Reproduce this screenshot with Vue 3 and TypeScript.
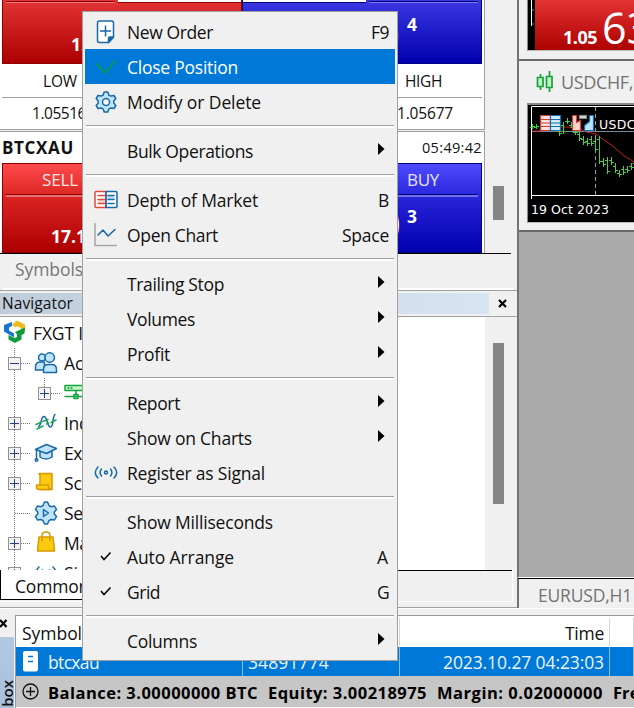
<script setup lang="ts">
type Entry = {
  label?: string
  width?: number
  key?: string
  keyWidth?: number
  icon?: string
  sub?: boolean
  active?: boolean
}

const entries: Entry[] = [
  { label: 'New Order', width: 86, key: 'F9', keyWidth: 18, icon: 'new' },
  { label: 'Close Position', width: 111, icon: 'close', active: true },
  { label: 'Modify or Delete', width: 134, icon: 'gear' },
  {},
  { label: 'Bulk Operations', width: 126, sub: true },
  {},
  { label: 'Depth of Market', width: 131, key: 'B', keyWidth: 11, icon: 'depth' },
  { label: 'Open Chart', width: 91, key: 'Space', keyWidth: 47, icon: 'chart' },
  {},
  { label: 'Trailing Stop', width: 97, sub: true },
  { label: 'Volumes', width: 68, sub: true },
  { label: 'Profit', width: 43, sub: true },
  {},
  { label: 'Report', width: 53, sub: true },
  { label: 'Show on Charts', width: 125, sub: true },
  { label: 'Register as Signal', width: 138, icon: 'signal' },
  {},
  { label: 'Show Milliseconds', width: 146 },
  { label: 'Auto Arrange', width: 107, key: 'A', keyWidth: 12, icon: 'tick' },
  { label: 'Grid', width: 33, key: 'G', keyWidth: 12, icon: 'tick' },
  {},
  { label: 'Columns', width: 70, sub: true },
]

type Node = { label: string; width: number; icon: string; box: '' | '+' | '-'; child?: boolean }
const nodes: Node[] = [
  { label: 'Accounts', width: 73, icon: 'users', box: '-' },
  { label: '', width: 0, icon: 'server', box: '+', child: true },
  { label: 'Indicators', width: 78, icon: 'wave', box: '+' },
  { label: 'Expert Advisors', width: 118, icon: 'cap', box: '+' },
  { label: 'Scripts', width: 54, icon: 'script', box: '+' },
  { label: 'Services', width: 64, icon: 'service', box: '' },
  { label: 'Market', width: 55, icon: 'bag', box: '+' },
  { label: 'Signals', width: 56, icon: 'signal', box: '+' },
]

const bars: number[][] = [
  [0, 20, 25], [4, 20, 25], [27, 24, 32], [31, 18, 30], [35, 14, 20], [39, 18, 24],
  [43, 25, 31], [47, 27, 37], [51, 32, 41], [55, 34, 42], [59, 32, 42], [63, 34, 48],
  [67, 32, 60], [71, 54, 63], [75, 53, 70], [79, 53, 61], [83, 59, 69], [87, 66, 73],
  [91, 62, 71], [95, 62, 69], [99, 59, 66], [103, 56, 63],
]

/* Spreads the letters of a label so that it takes the given number of pixels. */
const vFit = {
  mounted(el: HTMLElement, binding: { value: number | undefined }) {
    const n = (el.textContent || '').length
    if (!n || !binding.value) return
    const natural = el.getBoundingClientRect().width
    el.style.letterSpacing = `${(binding.value - natural) / n}px`
  },
}
</script>

<template>
  <div class="screen">
    <div class="upper">
      <section class="left">
        <div class="watch">
          <div class="cards">
            <div class="card first">
              <div class="tiles">
                <div class="tile red"><i class="rule fromleft"></i><i class="slot end"></i><b class="small lowprice">1.05</b></div>
                <div class="tile blue"><i class="slot start"></i><i class="rule fromright"></i><b class="small pip">4</b><span class="ring ringtop">0</span></div>
              </div>
              <div class="stat"><span v-fit="34">LOW</span><span v-fit="37">HIGH</span></div>
              <div class="stat values"><span v-fit="54">1.05516</span><span v-fit="56">1.05677</span></div>
            </div>
            <div class="card second">
              <div class="head"><b v-fit="72">BTCXAU</b><span v-fit="60">05:49:42</span></div>
              <div class="tiles">
                <div class="tile red tall">
                  <span class="side" v-fit="36">SELL</span><b class="small price">17.18</b>
                </div>
                <div class="tile blue tall">
                  <span class="side" v-fit="32">BUY</span><b class="small three">3</b><span class="ring">0</span>
                </div>
              </div>
            </div>
          </div>
          <div class="track"><div class="thumb"></div></div>
        </div>
        <div class="watchtabs"><span v-fit="68">Symbols</span></div>
        <div class="navtitle">
          <div class="caption"><span v-fit="71">Navigator</span></div>
          <svg class="x" width="9" height="9" viewBox="0 0 9 9"><path d="M1 1l7 7M8 1L1 8" stroke="#000" stroke-width="2.2" /></svg>
        </div>
        <div class="nav">
          <div class="tree">
            <div class="row root">
              <svg width="24" height="24" viewBox="0 0 24 24">
                <path d="M1 5l8-3v4L6 7.500v3l5 3v4L1 11.500z" fill="#1675d1" />
                <path d="M9 4.500l5-4 8 4v5.500l-4 2V8l-4-1.500-2 1z" fill="#efbd22" />
                <path d="M12 12l10-4.500-.5 6-3 1.500v4.500L12 23l-6.500-3.500V15l6 3 2.500-1v-2.500z" fill="#119a3b" />
              </svg>
              <span v-fit="50">FXGT I</span>
            </div>
            <div v-for="node in nodes" :key="node.icon" class="row">
              <svg class="gutter" :width="node.child ? 62 : 32" height="30">
                <path d="M14.5 0V30" stroke="#777" stroke-dasharray="1 1" />
                <g :transform="node.child ? 'translate(30 0)' : ''">
                  <path v-if="node.child" d="M14.5 0V10" stroke="#777" stroke-dasharray="1 1" />
                  <path d="M15 15.5H31" stroke="#777" stroke-dasharray="1 1" />
                  <g v-if="node.box">
                    <rect x="8.5" y="9.5" width="12" height="12" fill="#f4f4f4" stroke="#919191" />
                    <path d="M10 15.5h9" stroke="#294180" />
                    <path v-if="node.box === '+'" d="M14.5 11v9" stroke="#294180" />
                  </g>
                </g>
              </svg>
              <svg class="nodeicon" width="24" height="24" viewBox="0 0 24 24" fill="none" stroke="#1769a8" stroke-width="1.5" stroke-linejoin="round" stroke-linecap="round">
                <g v-if="node.icon === 'users'" fill="#bfe4fb">
                  <path d="M1.500 19v-3q0-5 5-5h4v8z" /><circle cx="8" cy="6.500" r="3.500" />
                  <path d="M9.500 21.500v-3q0-5 5-5h3q5 0 5 5v3z" /><circle cx="15.700" cy="6.500" r="4.700" />
                </g>
                <g v-else-if="node.icon === 'server'" stroke="#12a33c">
                  <path d="M1 4.500h23v5H1z" fill="#c5f6c9" /><path d="M4 7h1M7 7h1M12 10v4M1 15.500h23M10 13.500h4v4h-4z" />
                </g>
                <g v-else-if="node.icon === 'wave'">
                  <path d="M4.500 15.500C8 14 6.500 5.500 10 5.500S13 16 16.500 16 18 6 21 3.500" />
                  <path d="M2 13.500l4.500-2M9 10.500l5-2M3 18l6-3M12.500 13l2-1M17 11.500l5-2.500" stroke="#18a84b" />
                </g>
                <g v-else-if="node.icon === 'cap'">
                  <path d="M6 10v6q6 4 12 0v-6" fill="#bfe4fb" /><path d="M1.500 8.500l11-5 10 4-10 5z" fill="#bfe4fb" /><path d="M2.500 9v9" /><circle cx="2.500" cy="19" r="1.300" />
                </g>
                <g v-else-if="node.icon === 'script'" stroke="#d49a06" fill="#ffc90e">
                  <path d="M5 2.500h13v16H6V4z" /><path d="M2.500 14h12v2.500l2 2H5q-2.500 0-2.500-2.500z" />
                </g>
                <g v-else-if="node.icon === 'service'" fill="#bfe4fb">
                  <path d="M10.500 1h3l1.500 3.500 2 1.200 3.500-.7 2 3.500-2.200 2.500v2l2.200 2.500-2 3.500-3.500-.5-2 1.200-1.500 3.300h-3L9 19.700l-2-1.200-3.500.5-2-3.500L3.700 13v-2L1.500 8.500l2-3.500 3.500.7 2-1.200z" />
                  <path d="M9.500 8.500v7l5-3.500z" />
                </g>
                <g v-else-if="node.icon === 'bag'" stroke="#d49a06">
                  <path d="M5 6h14l1.500 14h-17z" fill="#ffc90e" /><path d="M8 9.500V4.500q0-3.500 4-3.500t4 3.500v5" />
                </g>
                <g v-else>
                  <path d="M5 6q-6 6 0 12M8.500 9q-2.500 3 0 6M19 6q6 6 0 12M15.500 9q2.500 3 0 6" /><circle cx="12" cy="12" r="1.500" />
                </g>
              </svg>
              <span v-fit="node.width">{{ node.label }}</span>
            </div>
          </div>
          <div class="track"><div class="thumb long"></div></div>
        </div>
        <div class="navtabs"><div class="common"><span v-fit="74">Common</span></div></div>
      </section>

      <section class="right">
        <div class="win one">
          <div class="canvas">
            <svg width="6" height="50"><path d="M3.500 0V26" stroke="#fff" /><path d="M4 10h2M4 24h2" stroke="#2c2" /></svg>
            <div class="quote"><b v-fit="34">1.05</b><span>63</span></div>
          </div>
        </div>
        <div class="win two">
          <div class="wintitle">
            <svg width="18" height="22" viewBox="0 0 18 22" fill="#bff8c5" stroke="#13a337" stroke-width="1.700">
              <path d="M4.500 3v16M13.500 0v21" /><path d="M1.500 6.500h5.500v9H1.500zM10.500 5.500H16v11h-5.500z" />
            </svg>
            <span v-fit="72">USDCHF,</span>
          </div>
          <div class="canvas plot">
            <svg width="106" height="116" viewBox="0 1 106 116">
              <path d="M3.500 95V2.500H106" fill="none" stroke="#fff" /><path d="M3 91.500H106" stroke="#fff" />
              <path d="M4 27.500H106" stroke="#778899" /><path d="M67.500 3V91" stroke="#9a9a9a" stroke-dasharray="4 3" />
              <path d="M4 27H12L30 23l8 0 12 1 8 4 10 2 8 6 10 7 9 8 11 7" fill="none" stroke="#c32020" />
              <g v-for="b in bars" :key="b[0]" stroke="#39d833">
                <path :d="`M${b[0] + 4.5} ${b[1]}V${b[2]}M${b[0] + 2} ${b[1] + 3.5}h2M${b[0] + 5} ${b[2] - 2.5}h2`" />
              </g>
              <g stroke-width="1.200">
                <path d="M12.500 11.500h10v15h-10z" fill="#fbe2df" stroke="#d63831" /><path d="M22.500 11.500h10v15h-10z" fill="#d4edfc" stroke="#176aaa" />
                <path d="M13 15.500h9M13 19h9M13 22.500h9" stroke="#d63831" /><path d="M23 15.500h9M23 19h9M23 22.500h9" stroke="#176aaa" />
                <path d="M44.500 11.500h4v7l4-2v10h-8z" fill="#fbd4ce" stroke="#d63831" /><path d="M65.500 11.500h-4v6l-5 4v5h9z" fill="#b8e2fb" stroke="#176aaa" />
                <rect x="51.500" y="11.500" width="7" height="3" fill="#ddd" stroke="#888" />
              </g>
              <text x="71" y="25" class="chartlabel" textLength="76">USDCHF,H1</text>
              <text x="3" y="110" class="chartlabel" textLength="78">19 Oct 2023</text>
            </svg>
          </div>
        </div>
        <div class="desk"></div>
        <div class="charttabs"><span v-fit="94">EURUSD,H1</span></div>
      </section>
    </div>

    <div class="toolbox">
      <div class="strip">
        <svg width="9" height="9" viewBox="0 0 9 9"><path d="M1 1l6.500 7M7.500 1L1 8" stroke="#000" stroke-width="2.200" /></svg>
        <div class="vertical"><span>Toolbox</span></div>
      </div>
      <div class="table">
        <div class="cells header"><div><span v-fit="60">Symbol</span></div><div></div><div class="end"><span v-fit="39">Time</span></div><div></div></div>
        <div class="cells selected">
          <div>
            <svg width="16" height="21" viewBox="0 0 16 21"><rect width="15" height="20.500" rx="2" fill="#fff" /><path d="M5 5.500h5M5 10.500h5" stroke="#0078d7" stroke-width="1.500" /></svg>
            <span v-fit="51">btcxau</span>
          </div>
          <div class="ticket"><span v-fit="81">34891774</span></div>
          <div class="end"><span v-fit="161">2023.10.27 04:23:03</span></div>
          <div></div>
        </div>
        <div class="balance">
          <svg width="17" height="17" viewBox="0 0 17 17" fill="none" stroke="#111" stroke-width="1.300"><circle cx="8.500" cy="8.500" r="7.500" /><path d="M4 8.500h9M8.500 4v9" /></svg>
          <b v-fit="210">Balance: 3.00000000 BTC</b><b v-fit="159">Equity: 3.00218975</b><b v-fit="166">Margin: 0.02000000</b><b v-fit="104">Free Margin:</b>
        </div>
      </div>
    </div>

    <div class="menu">
      <template v-for="(e, i) in entries" :key="i">
        <div v-if="!e.label" class="sep"></div>
        <div v-else class="item" :class="{ active: e.active }">
          <svg class="icon" width="24" height="24" viewBox="0 0 24 24" fill="none" stroke="#1769a8" stroke-width="1.500" stroke-linejoin="round" stroke-linecap="round">
            <g v-if="e.icon === 'new'">
              <path d="M5.500 1h12q2 0 2 2v14l-5 5.500h-9q-2 0-2-2V3q0-2 2-2z" fill="#fff" /><path d="M19.500 17h-3.500q-1.500 0-1.500 1.500v4z" fill="#1769a8" /><path d="M11.500 5.500v11M6 11h11" stroke-linecap="butt" />
            </g>
            <path v-else-if="e.icon === 'close'" d="M3 10l8 9L21 7" transform="translate(0 -1)" stroke="#059663" stroke-width="2" />
            <g v-else-if="e.icon === 'gear'">
              <path d="M10.200 2h3.600l1 3 2 1.100 3.200-.6 1.800 3-2 2.500v2l2 2.500-1.800 3-3.200-.6-2 1.200-1 3h-3.600l-1-3-2-1.200-3.200.6-1.800-3L4.200 13v-2l-2-2.500 1.800-3 3.200.6 2-1.100z" fill="#bfe4fb" /><circle cx="12" cy="12" r="3.500" fill="#fff" />
            </g>
            <g v-else-if="e.icon === 'depth'">
              <rect x="1" y="3.500" width="22" height="16" rx="1" fill="#fff" stroke="none" />
              <path d="M12 3.500H2q-1 0-1 1v14q0 1 1 1h10M12 4v15" stroke="#db493f" /><path d="M12 3.500h10q1 0 1 1v14q0 1-1 1H12z" />
              <path d="M4 11.500h7v4H4z" fill="#fbd4ce" stroke="none" /><path d="M13.500 7h7v4.500h-7z" fill="#b8e2fb" stroke="none" />
              <path d="M4 7.500h6.500M4 11.500h6.500M4 15.500h6.500" stroke="#db493f" /><path d="M14 7.500h6M14 11.500h6M14 15.500h6" />
            </g>
            <g v-else-if="e.icon === 'chart'">
              <path d="M1 0v22.500h22" stroke="#a6a6a6" stroke-linecap="butt" stroke-linejoin="miter" /><path d="M4 12l5-5 5 6 7-6.500" />
            </g>
            <g v-else-if="e.icon === 'signal'">
              <path d="M4 6q-5.500 5.500 0 11M7.500 8q-2.800 3.500 0 7M20 6q5.500 5.500 0 11M16.500 8q2.800 3.500 0 7" /><circle cx="12" cy="11.500" r="1.500" />
            </g>
            <path v-else-if="e.icon === 'tick'" d="M7 11l3 3.500L16.500 7.500" stroke="#000" stroke-linecap="butt" stroke-linejoin="miter" />
          </svg>
          <span class="label"><span v-fit="e.width">{{ e.label }}</span></span>
          <span v-if="e.key" class="key" v-fit="e.keyWidth">{{ e.key }}</span>
          <svg v-if="e.sub" class="arrow" width="7" height="12" viewBox="0 0 7 12"><path d="M0 0l6.500 6L0 12z" /></svg>
        </div>
      </template>
    </div>
  </div>
</template>

<style>
body { margin: 0; overflow: hidden; }
</style>

<style scoped>
* { box-sizing: border-box; }
.screen { position: relative; width: 634px; height: 708px; overflow: hidden; background: #f0f0f0; font: 17.5px/24px "Open Sans", "Noto Sans", sans-serif; color: #111; }
.screen span, .screen b { white-space: nowrap; flex: none; }
svg { display: block; flex: none; }
.upper { display: flex; height: 608px; }
.left { width: 517px; flex: none; border-bottom: 1px solid #a0a0a0; }
.watch { display: flex; height: 253px; }
.cards { width: 485px; flex: none; overflow: hidden; }
.card { background: #fff; border-right: 1px solid #a0a0a0; padding: 0 2px 0 2px; }
.first { height: 130px; border-bottom: 1px solid #a0a0a0; }
.second { height: 122px; margin-top: 1px; border-top: 1px solid #a0a0a0; }
.tiles { display: flex; }
.tile { position: relative; flex: 1; height: 64px; overflow: hidden; color: #fff; }
.tile.red { background: linear-gradient(#e23434, #ad0000); border: 1px solid #8d0000; border-top: 0; }
.tile.blue { background: linear-gradient(#3b38e2, #0000ad); border: 1px solid #000080; border-top: 0; }
.slot { position: absolute; top: 0; width: 123px; height: 3px; background: #fff; border-bottom: 1px solid #8d0000; }
.blue .slot { border-color: #000080; }
.slot.end { right: 0; }
.slot.start { left: 0; }
.rule { position: absolute; top: 1px; width: 109px; height: 2px; background: rgba(255, 255, 255, 0.35); border-top: 1px solid #8d0000; }
.rule.fromleft { left: 3px; }
.rule.fromright { right: 3px; border-color: #000080; }
.small { position: absolute; font-size: 17.5px; line-height: 20px; }
.lowprice { left: 68px; top: 34px; }
.pip { left: 164px; top: 14px; }
.tile.tall { height: 90px; border-top: 1px solid; }
.tile.red.tall { background: linear-gradient(#ff4b4b, #d82222 40%, #ad0000); border-color: #8d0000; }
.tile.blue.tall { background: linear-gradient(#4e4bff, #2723d8 40%, #0000ad); border-color: #000080; }
.tile.tall::after { content: ""; position: absolute; left: 3px; right: 3px; top: 30px; height: 2px; border-top: 1px solid #8d0000; background: rgba(255, 255, 255, 0.35); }
.tile.blue.tall::after { border-color: #000080; }
.side { position: absolute; left: 39px; top: 4px; font-size: 17px; line-height: 23px; opacity: 0.88; }
.blue .side { left: 164px; }
.price { left: 48px; top: 62px; }
.three { left: 164px; top: 42px; }
.ring { position: absolute; left: 134px; top: 33px; font-size: 42px; line-height: 54px; }
.ringtop { left: 133px; top: 8px; }
.stat { display: flex; justify-content: space-between; height: 34px; padding: 5px 40px 0 41px; border-bottom: 1px solid #a0a0a0; font-size: 15.5px; }
.stat.values { height: 32px; padding: 3px 29px 0 30px; border: 0; }
.head { display: flex; justify-content: space-between; height: 31px; padding: 4px 0 0; }
.head b { font-size: 17px; }
.head span { font-size: 14.5px; }
.track { width: 27px; padding-left: 8px; background: #f0f0f0; }
.thumb { width: 11px; height: 34px; margin-top: 186px; background: #858585; }
.thumb.long { height: 161px; margin-top: 26px; }
.watchtabs { height: 37px; margin-right: 6px; padding: 3px 0 0 15px; border-top: 1px solid #000; color: #777; }
.navtitle { display: flex; align-items: center; gap: 9px; height: 27px; border-top: 1px solid #a0a0a0; border-bottom: 1px solid #a0a0a0; box-shadow: 0 -5px 0 -3px #fff; }
.caption { width: 489px; height: 21px; padding-left: 2px; background: linear-gradient(90deg, #bfcddb, #d8e4f1); font-size: 15.5px; line-height: 20px; }
.nav { display: flex; height: 254px; width: 512px; border-bottom: 1px solid #000; }
.tree { width: 486px; height: 253px; padding-top: 1px; overflow: hidden; background: #fff; }
.row { display: flex; align-items: center; height: 30px; }
.root { padding-left: 3px; gap: 6px; }
.root svg { margin-top: -2px; }
.nodeicon { margin: 0 6px 0 2px; }
.navtabs { height: 32px; width: 513px; border-right: 1px solid #fff; border-bottom: 1px solid #fff; }
.common { width: 100px; height: 30px; padding: 4px 0 0 14px; margin-top: -1px; background: #fff; border-left: 1px solid #000; border-bottom: 1px solid #000; position: relative; }
.right { flex: 1; min-width: 0; border-left: 2px solid #737373; }
.win { border-bottom: 2px solid #696969; padding-left: 8px; overflow: hidden; }
.one { height: 61px; }
.one .canvas { height: 51px; display: flex; border-top: 0; }
.canvas { border: 2px solid #888; border-right: 0; border-bottom: 1px solid #bbb; border-left-width: 1px; background: #000; overflow: hidden; }
.quote { flex: none; width: 110px; display: flex; align-items: flex-end; margin-left: 1px; padding-left: 28px; gap: 5px; color: #fff; background: linear-gradient(#e23434, #ad0000); }
.quote b { font-size: 18px; line-height: 25px; }
.quote span { font-size: 43px; line-height: 45px; }
.two { height: 171px; }
.wintitle { display: flex; align-items: center; gap: 7px; height: 42px; padding: 0 0 1px 9px; color: #737373; font-size: 18px; line-height: 22px; }
.plot { height: 120px; }
.chartlabel { fill: #fff; font: 12.5px "DejaVu Sans", sans-serif; }
.desk { height: 346px; background: #ababab; }
.charttabs { height: 28px; margin-left: -1px; border-top: 1px solid #000; padding: 4px 0 0 20px; color: #737373; box-shadow: 0 -1px #fff; }
.toolbox { display: flex; height: 100px; padding-top: 6px; border-top: 1px solid #fff; }
.strip { width: 15px; flex: none; padding-top: 4px; }
.strip svg { margin-left: -1px; }
.vertical { width: 14px; height: 72px; margin-top: 9px; padding-top: 43px; overflow: hidden; background: linear-gradient(#b2c8e2, #a9c0dc); }
.vertical span { display: block; writing-mode: vertical-rl; transform: rotate(180deg); width: 14px; font-size: 15px; line-height: 15px; font-weight: 600; }
.table { flex: 1; min-width: 0; border-left: 1px solid #999; border-top: 1px solid #999; overflow: hidden; background: #fff; }
.cells { display: grid; grid-template-columns: 227px 157px 210px 24px; height: 31px; }
.cells > div { display: flex; align-items: center; border-right: 1px solid #d6d6d6; padding-left: 6px; }
.cells > .end { justify-content: flex-end; padding-right: 5px; }
.cells.header { padding-top: 2px; }
.cells.selected { height: 29px; background: #0078d7; color: #eaf5ff; }
.selected > div:first-child { padding-left: 7px; gap: 9px; }
.selected > div { border-color: #8abce8; }
.cells > .ticket { padding-left: 5px; }
.balance { display: flex; align-items: center; height: 31px; padding: 2px 0 0 6px; gap: 10px; background: #c6c6c6; color: #000; }
.balance svg { margin: -2px -1px 0 0; }
.balance b { font-size: 16.5px; }
.menu { position: absolute; left: 82px; top: 11px; width: 316px; height: 650px; padding: 2px 2px 2px; border: 1px solid #a0a0a0; background: #f0f0f0; }
.item { display: flex; align-items: center; height: 35px; padding: 0 6px 0 9px; }
.item.active { background: #0078d7; color: #fff; }
.label { flex: 1 !important; margin-left: 9px; }
.arrow { margin: -4px 4px 0 0; }
.sep { height: 14px; margin: 0 1px; padding-top: 6px; }
.sep::before { content: ""; display: block; height: 2px; border-top: 1px solid #a0a0a0; background: #fff; }
</style>
